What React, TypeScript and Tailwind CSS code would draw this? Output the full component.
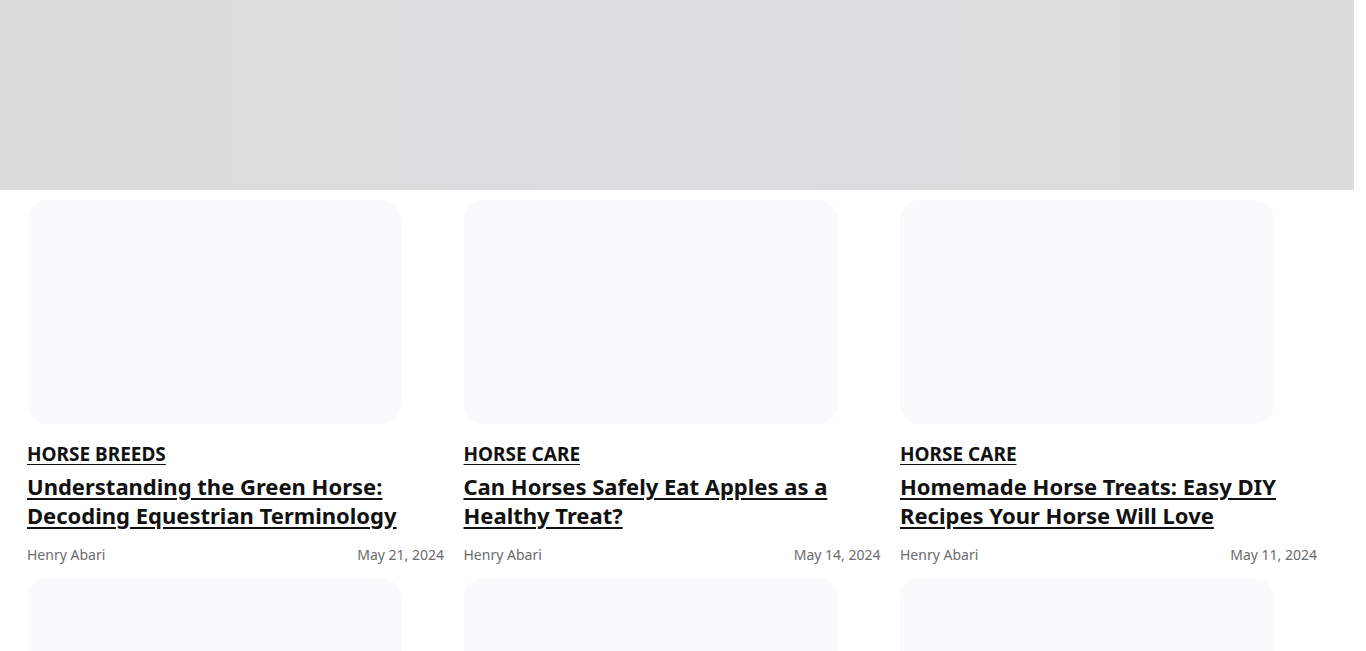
const posts = [
  {
    category: 'Horse Breeds',
    title: 'Understanding the Green Horse: Decoding Equestrian Terminology',
    author: 'Henry Abari',
    date: 'May 21, 2024',
  },
  {
    category: 'Horse Care',
    title: 'Can Horses Safely Eat Apples as a Healthy Treat?',
    author: 'Henry Abari',
    date: 'May 14, 2024',
  },
  {
    category: 'Horse Care',
    title: 'Homemade Horse Treats: Easy DIY Recipes Your Horse Will Love',
    author: 'Henry Abari',
    date: 'May 11, 2024',
  },
  { category: '', title: '', author: '', date: '' },
  { category: '', title: '', author: '', date: '' },
  { category: '', title: '', author: '', date: '' },
];

function PostCard({ category, title, author, date }: (typeof posts)[number]) {
  return (
    <article className="flex flex-col">
      <div className="h-[224px] w-[374px] rounded-[20px] bg-[#f9fafb]" />
      {title ? (
        <>
          <a href="#" className="mt-[17px] text-[19px] font-bold uppercase leading-[26px] text-[#111] underline underline-offset-[3px]">
            {category}
          </a>
          <h2 className="mt-[5px] text-[22px] font-bold leading-[29px] text-[#111]">
            <a href="#" className="underline underline-offset-[3px]">
              {title}
            </a>
          </h2>
          <div className="mt-[15px] flex items-center justify-between text-[14px] leading-[20px] text-[#6b6b6b]">
            <span>{author}</span>
            <span>{date}</span>
          </div>
        </>
      ) : null}
    </article>
  );
}

export default function App() {
  return (
    <div className="min-h-screen w-[1354px] bg-white" style={{ fontFamily: '"Noto Sans", sans-serif' }}>
      <div className="h-[190px] w-full bg-gradient-to-r from-[#dcdcdc] via-[#dcdddf] to-[#dcdcdc]" />
      <main className="grid grid-cols-[417px_417px_417px] gap-x-[19.5px] gap-y-[13px] px-[27px] pt-[10px]">
        {posts.map((p, i) => (
          <PostCard key={i} {...p} />
        ))}
      </main>
    </div>
  );
}
